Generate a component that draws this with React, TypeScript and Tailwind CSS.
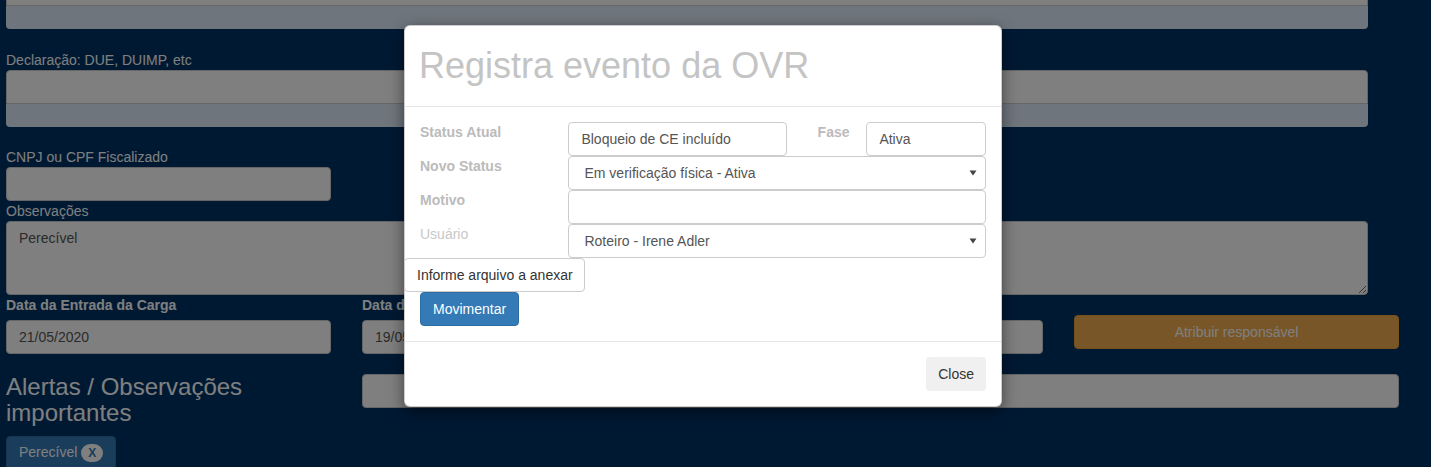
import React from "react";

const Arrow = () => (
  <svg width="8" height="6" viewBox="0 0 8 6" className="text-[#444]">
    <path d="M0.5 0.5 L7.5 0.5 L4 5.5 Z" fill="currentColor" />
  </svg>
);

function Field({ label, children }: { label: string; children: React.ReactNode }) {
  return (
    <div className="flex">
      <div className="w-[149px] font-bold leading-[20px] text-[#bbbbbb]">{label}</div>
      {children}
    </div>
  );
}

function SelectBox({ value }: { value: string }) {
  return (
    <div className="flex h-[34px] w-[419px] items-center justify-between rounded border border-[#cccccc] pl-[15px] pr-[8px] text-[#555]">
      <span>{value}</span>
      <Arrow />
    </div>
  );
}

export default function App() {
  return (
    <div className="relative h-[467px] w-[1431px] overflow-hidden bg-[#003366] font-['Liberation_Sans',Arial,sans-serif] text-[14px] text-white">
      {/* page under the modal */}
      <div className="pl-[6px]">
        <div className="-mt-[28px] w-[1362px]">
          <div className="h-[34px] rounded-t border border-[#cccccc] bg-white" />
          <div className="h-[23px] rounded-b bg-[#dceaf8]" />
          <label className="mt-[21px] block leading-[20px]">Declaração: DUE, DUIMP, etc</label>
          <div className="h-[34px] rounded-t border border-[#cccccc] bg-white" />
          <div className="h-[23px] rounded-b bg-[#dceaf8]" />
          <label className="mt-[20px] block leading-[20px]">CNPJ ou CPF Fiscalizado</label>
          <div className="h-[34px] w-[325px] rounded border border-[#cccccc] bg-white" />
          <label className="block leading-[20px]">Observações</label>
          <textarea
            readOnly
            defaultValue="Perecível"
            className="block h-[74px] w-full rounded border border-[#cccccc] bg-white px-[12px] py-[6px] leading-[20px] text-[#555]"
          />
        </div>

        <div className="grid w-[1393px] grid-cols-4 gap-x-[31px]">
          <div>
            <label className="mb-[5px] block font-bold leading-[20px]">Data da Entrada da Carga</label>
            <div className="flex h-[34px] items-center rounded border border-[#cccccc] bg-white px-[12px] text-[#555]">21/05/2020</div>
          </div>
          <div>
            <label className="mb-[5px] block font-bold leading-[20px]">Data da Ocorrência</label>
            <div className="flex h-[34px] items-center rounded border border-[#cccccc] bg-white px-[12px] text-[#555]">19/05/2020</div>
          </div>
          <div>
            <label className="mb-[5px] block font-bold leading-[20px]">Responsável</label>
            <div className="h-[34px] rounded border border-[#cccccc] bg-white" />
          </div>
          <div className="pt-[20px]">
            <button className="h-[34px] w-full rounded border border-[#eea236] bg-[#f0ad4e] text-white">Atribuir responsável</button>
          </div>

          <h3 className="mt-[20px] text-[24px] leading-[26.4px]">Alertas / Observações importantes</h3>
          <div className="col-span-3 mt-[20px] h-[34px] rounded border border-[#cccccc] bg-white" />
        </div>

        <button className="mt-[9px] flex h-[34px] items-center rounded border border-[#2e6da4] bg-[#337ab7] px-[12px] text-white">
          Perecível
          <span className="ml-[4px] flex h-[18px] w-[22px] items-center justify-center rounded-full bg-white text-[12px] font-bold text-[#337ab7]">X</span>
        </button>
      </div>

      {/* backdrop */}
      <div className="absolute inset-0 bg-black/50" />

      {/* modal */}
      <div className="absolute inset-0 pl-[404px] pt-[25px]">
        <div className="w-[598px] rounded-md border border-black/20 bg-white shadow-[0_5px_15px_rgba(0,0,0,0.5)]">
          <div className="flex h-[81px] items-center border-b border-[#e5e5e5] px-[14px]">
            <h1 className="text-[36px] leading-[40px] text-[#c4c4c4]">Registra evento da OVR</h1>
          </div>

          <div className="p-[15px]">
            <Field label="Status Atual">
              <div className="flex h-[34px] w-[219px] items-center rounded border border-[#cccccc] px-[12px] text-[#555]">Bloqueio de CE incluído</div>
              <div className="ml-[31px] w-[49px] font-bold leading-[20px] text-[#bbbbbb]">Fase</div>
              <div className="flex h-[34px] w-[120px] items-center rounded border border-[#cccccc] px-[12px] text-[#555]">Ativa</div>
            </Field>
            <Field label="Novo Status">
              <SelectBox value="Em verificação física - Ativa" />
            </Field>
            <Field label="Motivo">
              <div className="h-[34px] w-[419px] rounded border border-[#cccccc]" />
            </Field>
            <div className="flex">
              <div className="w-[149px] leading-[20px] text-[#c8c8c8]">Usuário</div>
              <SelectBox value="Roteiro - Irene Adler" />
            </div>
            <div className="-ml-[16px] flex h-[34px] w-[181px] items-center whitespace-nowrap rounded border border-[#cccccc] bg-white pl-[12px] text-[#333]">
              Informe arquivo a anexar
            </div>
            <button className="h-[34px] rounded border border-[#2e6da4] bg-[#337ab7] px-[12px] text-white">Movimentar</button>
          </div>

          <div className="flex justify-end border-t border-[#e5e5e5] p-[15px]">
            <button className="h-[34px] rounded bg-[#f0f0f0] px-[12px] text-[#333]">Close</button>
          </div>
        </div>
      </div>
    </div>
  );
}
